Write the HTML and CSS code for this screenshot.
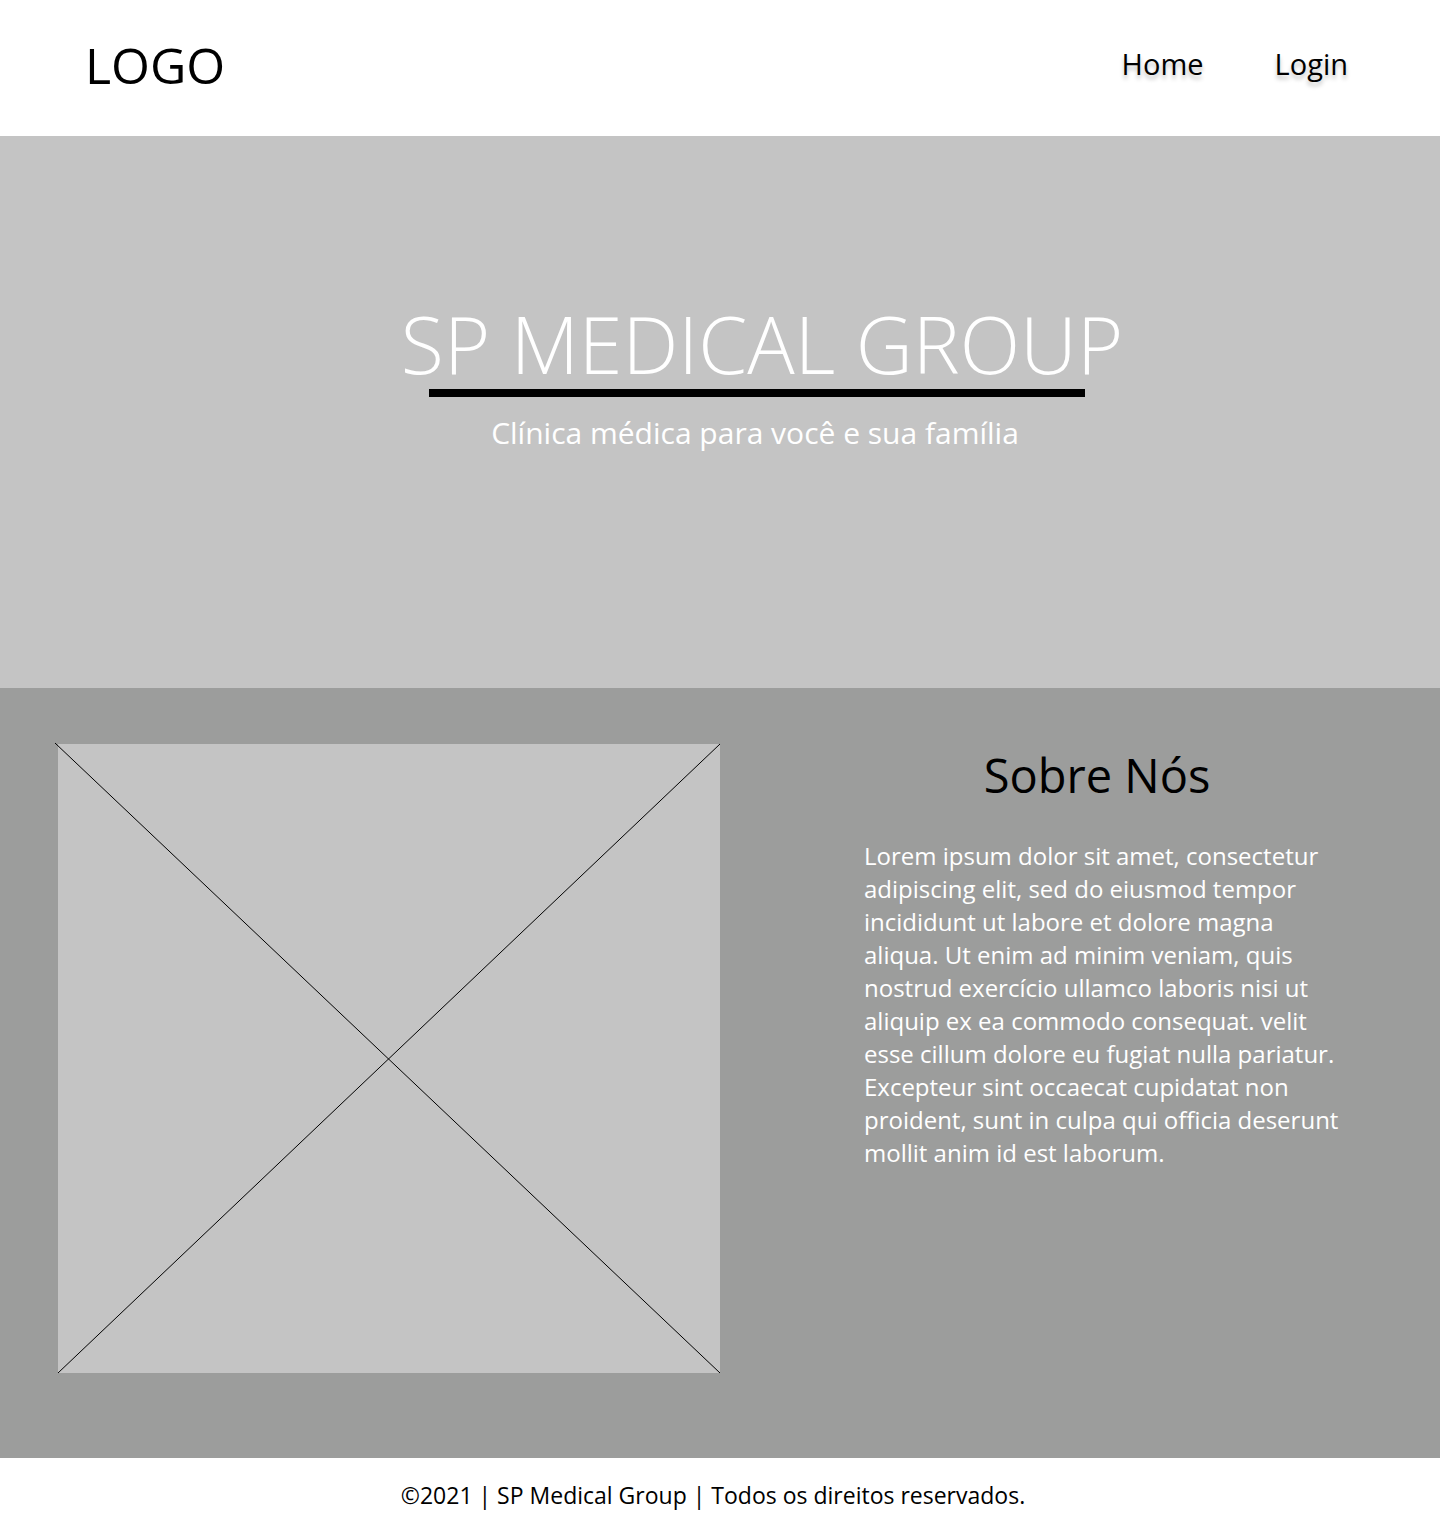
FILE: index.html
```html
<!DOCTYPE html>
<html lang="pt-BR">
<head>
<meta charset="utf-8">
<title>SP Medical Group</title>
<link rel="stylesheet" href="styles.css">
</head>
<body>
<header class="header">
  <div class="logo">LOGO</div>
  <nav class="nav">
    <a class="nav-link" href="#">Home</a>
    <a class="nav-link" href="#">Login</a>
  </nav>
</header>
<section class="hero">
  <div class="hero-inner">
    <h1 class="hero-title">SP MEDICAL GROUP</h1>
    <div class="hero-bar"></div>
    <p class="hero-sub">Clínica médica para você e sua família</p>
  </div>
</section>
<section class="about">
  <div class="about-img">
    <svg class="placeholder" viewBox="0 0 665 630" preserveAspectRatio="none">
      <line x1="0" y1="0" x2="665" y2="630" stroke="#000" stroke-width="1"/>
      <line x1="3" y1="630" x2="665" y2="1" stroke="#000" stroke-width="1"/>
    </svg>
  </div>
  <div class="about-text">
    <h2 class="about-title">Sobre Nós</h2>
    <p class="about-body">Lorem ipsum dolor sit amet, consectetur adipiscing elit, sed do eiusmod tempor incididunt ut labore et dolore magna aliqua. Ut enim ad minim veniam, quis nostrud exercício ullamco laboris nisi ut aliquip ex ea commodo consequat. velit esse cillum dolore eu fugiat nulla pariatur. Excepteur sint occaecat cupidatat non proident, sunt in culpa qui officia deserunt mollit anim id est laborum.</p>
  </div>
</section>
<footer class="footer">©2021 | SP Medical Group | Todos os direitos reservados.</footer>
</body>
</html>
```

FILE: styles.css
```css
* { box-sizing: border-box; }
html, body { margin: 0; padding: 0; }
body {
  font-family: "Open Sans", "Liberation Sans", sans-serif;
  background: #fff;
  color: #000;
  width: 1440px;
}
.header {
  height: 136px;
  display: flex;
  align-items: center;
  justify-content: space-between;
  padding: 0 92px 0 85px;
}
.logo {
  font-size: 50px;
  line-height: 1;
  margin-top: -6px;
}
.nav {
  display: flex;
  gap: 71px;
  margin-top: -9px;
}
.nav-link {
  font-size: 29px;
  color: #000;
  text-decoration: none;
  text-shadow: 0 4px 4px rgba(0,0,0,0.25);
}
.hero {
  height: 552px;
  background: #c4c4c4;
  padding-top: 168px;
  display: flex;
  justify-content: center;
}
.hero-inner {
  display: flex;
  flex-direction: column;
  align-items: center;
  margin-left: 84px;
}
.hero-title {
  margin: 0;
  font-size: 79px;
  line-height: 1;
  font-weight: 300;
  color: #fff;
  white-space: nowrap;
}
.hero-bar {
  width: 656px;
  height: 8px;
  background: #000;
  margin-top: 6px;
  margin-left: -10px;
}
.hero-sub {
  margin: 21px 0 0 -14px;
  font-size: 30px;
  line-height: 1;
  color: #fff;
}
.about {
  height: 770px;
  background: #9c9d9c;
  display: flex;
  padding: 56px 0 0 58px;
}
.about-img {
  width: 662px;
  height: 629px;
  background: #c4c4c4;
  position: relative;
  flex: none;
}
.placeholder {
  position: absolute;
  left: -3px;
  top: -1px;
  width: 665px;
  height: 630px;
  overflow: visible;
}
.about-text {
  margin-left: 144px;
  width: 480px;
  display: flex;
  flex-direction: column;
}
.about-title {
  margin: 8px 0 0 -14px;
  font-size: 47px;
  font-weight: 400;
  line-height: 1;
  text-align: center;
}
.about-body {
  margin: 40px 0 0;
  font-size: 24px;
  line-height: 33px;
  color: #fff;
}
.footer {
  height: 74px;
  display: flex;
  align-items: center;
  justify-content: center;
  font-size: 23px;
  padding-right: 14px;
}
```
